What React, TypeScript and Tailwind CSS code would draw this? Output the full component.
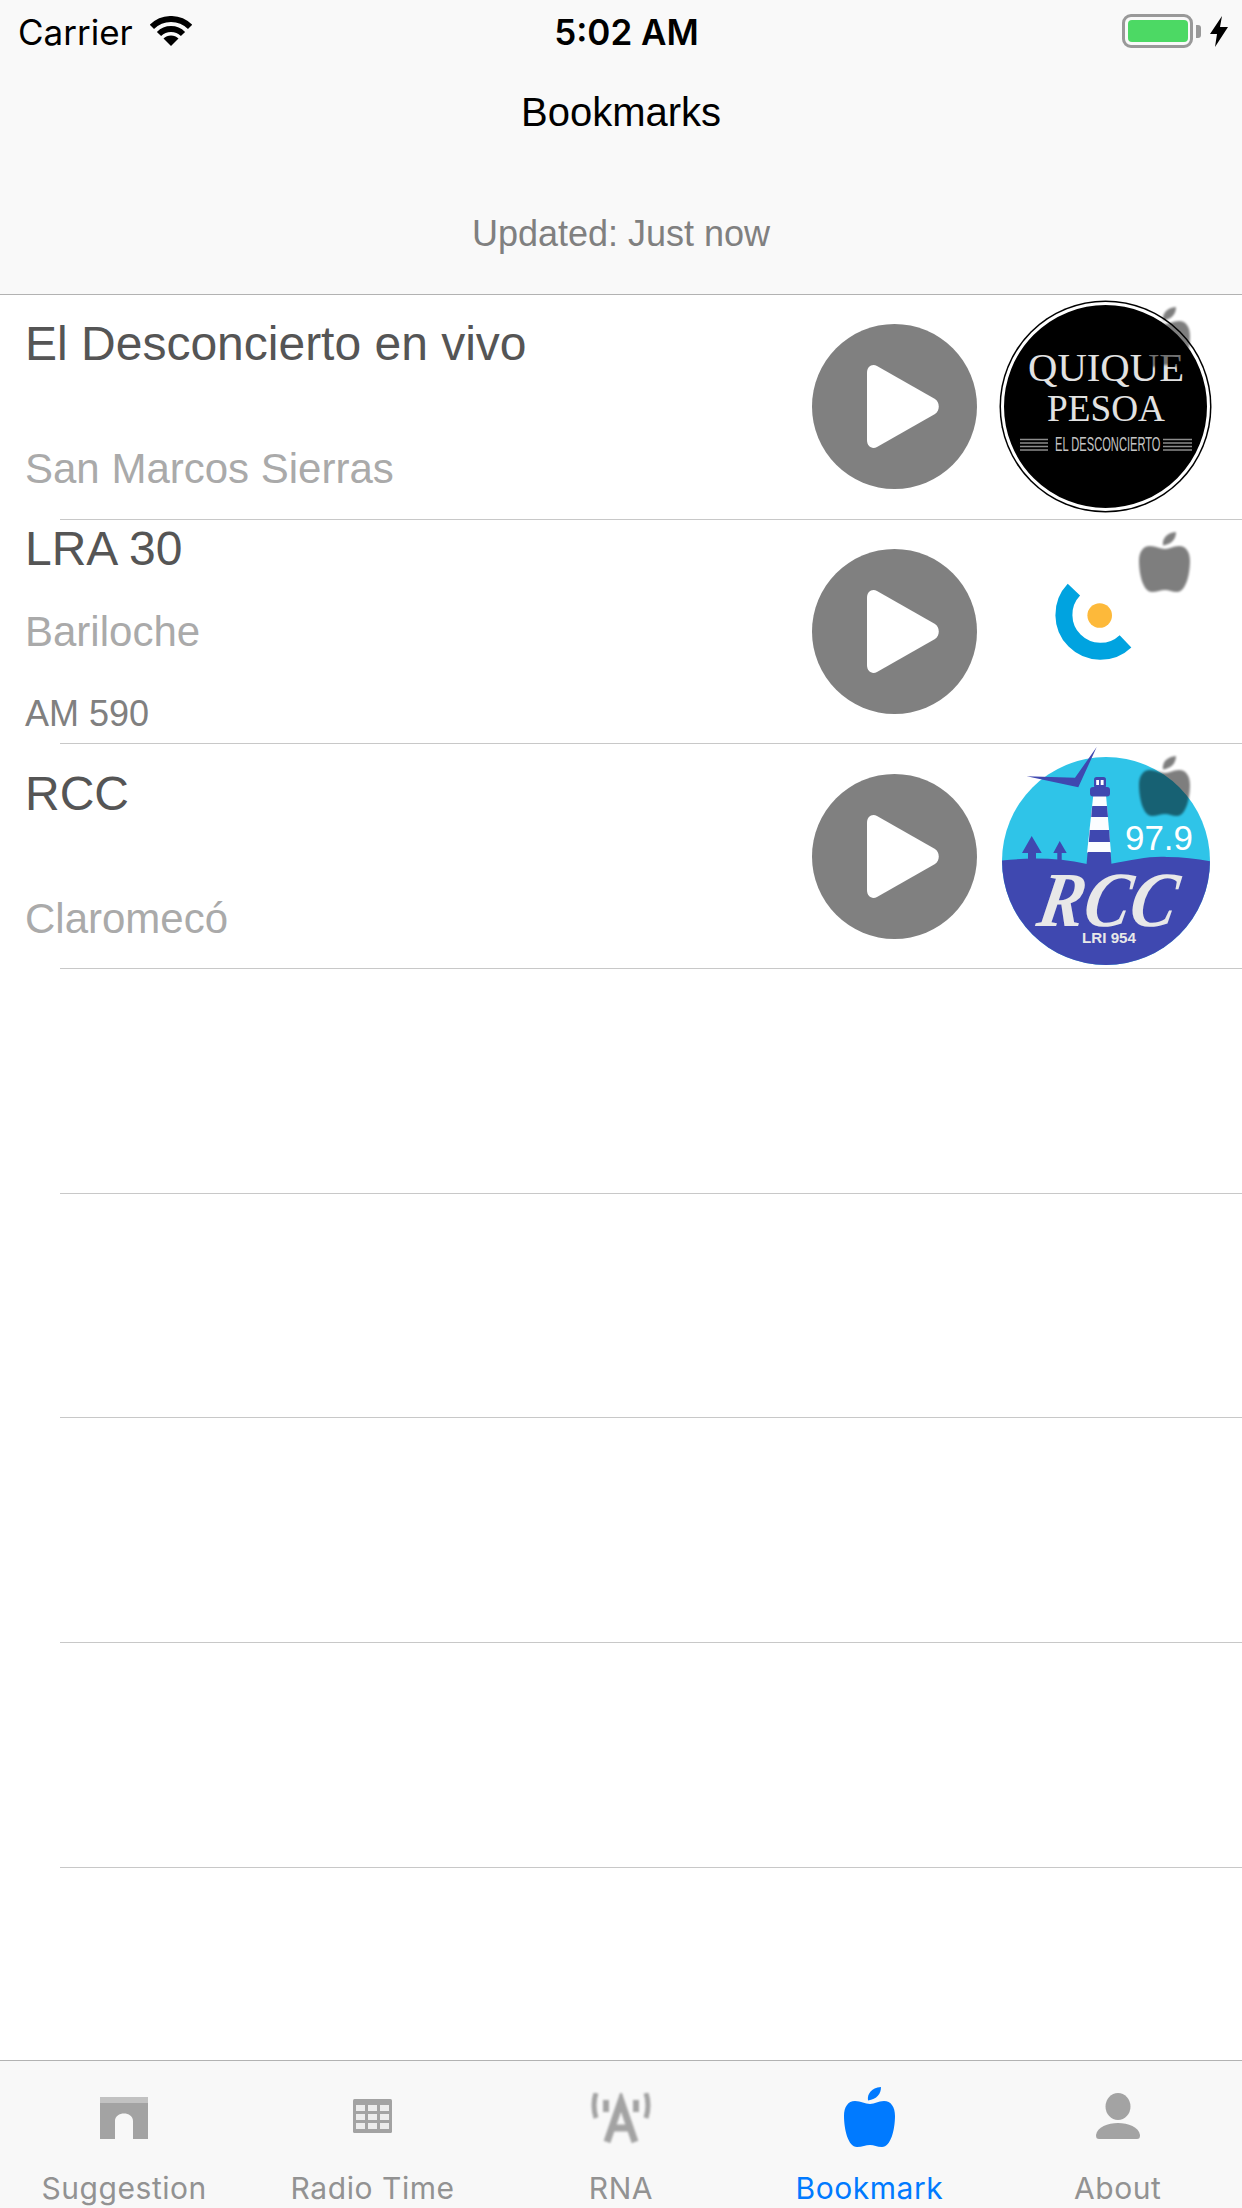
const stations = [
  {
    name: "El Desconcierto en vivo",
    city: "San Marcos Sierras",
    nameClass: "mt-[21px]",
    cityClass: "mt-[72px]",
    logo: <QuiqueLogo />,
  },
  {
    name: "LRA 30",
    city: "Bariloche",
    freq: "AM 590",
    nameClass: "mt-[1px]",
    cityClass: "mt-[30px]",
    logo: <RnaLogo />,
  },
  {
    name: "RCC",
    city: "Claromecó",
    nameClass: "mt-[22px]",
    cityClass: "mt-[72px]",
    logo: <RccLogo />,
  },
];

function AppleIcon({ className }: { className: string }) {
  return (
    <svg viewBox="0 0 51 60" className={className} fill="currentColor">
      <path d="M24 13.5C23 7 27 1 37 0C37 7 33 12 24 13.5Z" />
      <path d="M26 17C21 17 17 14 11 14C4 14 0 20 0 29C0 42 4 60 13 60C18 60 22 58 26 58C30 58 33 60 38 60C47 60 51 42 51 29C51 20 47 14 40 14C34 14 31 17 26 17Z" />
    </svg>
  );
}

function QuiqueLogo() {
  return (
    <svg viewBox="0 0 213 213" className="w-[213px] h-[213px]">
      <circle cx="106.5" cy="106.5" r="106" fill="#000" />
      <circle cx="106.5" cy="106.5" r="103" fill="none" stroke="#fff" strokeWidth="3" />
      <text x="29" y="81" fontSize="40" textLength="156" lengthAdjust="spacingAndGlyphs" fill="#e2e2e2" fontFamily="'Liberation Serif', serif">
        QUIQUE
      </text>
      <text x="48" y="121" fontSize="38" textLength="118" lengthAdjust="spacingAndGlyphs" fill="#e2e2e2" fontFamily="'Liberation Serif', serif">
        PESOA
      </text>
      <text transform="translate(56 151) scale(0.53 1)" fontSize="21" fill="#c4c4c4" fontFamily="'Liberation Sans', sans-serif">
        EL DESCONCIERTO
      </text>
      <path d="M21 139.5H49M21 143H49M21 146.5H49M21 150H49M164 139.5H193M164 143H193M164 146.5H193M164 150H193" stroke="#8c8c8c" strokeWidth="1.6" />
    </svg>
  );
}

function RnaLogo() {
  return (
    <svg viewBox="0 0 213 213" className="w-[213px] h-[213px]">
      <path d="M74.9 64.7A36.5 36.5 0 0 0 126.5 116.3" fill="none" stroke="#00a3e0" strokeWidth="17" />
      <circle cx="100.7" cy="90.5" r="12.3" fill="#fdb93a" />
    </svg>
  );
}

function RccLogo() {
  return (
    <svg viewBox="0 0 213 213" className="w-[213px] h-[213px] overflow-visible">
      <defs>
        <clipPath id="rcc-disc">
          <circle cx="107" cy="111" r="104" />
        </clipPath>
      </defs>
      <g clipPath="url(#rcc-disc)">
        <rect x="0" y="0" width="215" height="220" fill="#2fc4e8" />
        <path d="M0 111C30 107 60 108 88 114L111 114C135 110 150 106 168 107C185 107 200 109 215 112L215 220L0 220Z" fill="#3f48b0" />
      </g>
      <path d="M94.3 45H107L112 103H88Z" fill="#fbfdff" />
      <path d="M93.2 56H108L109 67H92.2ZM90.8 80H110.2L111 92H89.8ZM88.6 102H111.6L112.5 115H87.5Z" fill="#3f48b0" />
      <rect x="91" y="37" width="20" height="9.5" rx="3" fill="#3f48b0" />
      <rect x="95" y="27" width="12" height="11" rx="2.5" fill="#3f48b0" />
      <path d="M97.2 30H100V35H97.2ZM101.7 30H104.6V35H101.7Z" fill="#fff" />
      <path d="M32.7 86L42.7 103H37V111H29V103H23Z" fill="#3f48b0" />
      <path d="M60.7 91L67.7 103H62.7V110H58.3V103H54.3Z" fill="#3f48b0" />
      <path d="M27.7 26.3L76 27.7L97.7 -3L79.3 37.3Z" fill="#3f48b0" />
      <text x="126" y="100" fontSize="35" textLength="68" lengthAdjust="spacingAndGlyphs" fill="#fff" fontFamily="'Liberation Sans', sans-serif">
        97.9
      </text>
      <text transform="translate(36 176) skewX(-10)" fontSize="78" fontStyle="italic" fontWeight="700" textLength="138" lengthAdjust="spacingAndGlyphs" fill="#e8e8e8" fontFamily="'Liberation Serif', serif">
        RCC
      </text>
      <text x="83" y="193" fontSize="15.5" fontWeight="700" textLength="54" lengthAdjust="spacingAndGlyphs" fill="#e8e8e8" fontFamily="'Liberation Sans', sans-serif">
        LRI 954
      </text>
    </svg>
  );
}

function StationRow({ station }: { station: (typeof stations)[number] }) {
  return (
    <div>
      <div className="relative flex h-[223.67px] items-center">
        <div className="flex h-full flex-1 flex-col self-start pl-[25px]">
          <div className={`h-[56px] text-[48px] leading-[56px] text-[#555555] ${station.nameClass}`}>{station.name}</div>
          <div className={`h-[50px] text-[42px] leading-[50px] text-[#aaaaaa] ${station.cityClass}`}>{station.city}</div>
          {station.freq && (
            <div className="mt-[36px] h-[42px] text-[36px] leading-[42px] text-[#808080]">{station.freq}</div>
          )}
        </div>
        {/* Play button */}
        <div className="mr-[22px] flex h-[165px] w-[165px] items-center justify-center rounded-full bg-[#808080]">
          <svg viewBox="0 0 72 83" className="ml-[17px] h-[83px] w-[72px]" fill="#fff">
            <path d="M0 8C0 1.5 5 -1.5 10 1L68 34C73 37 73 46 68 49L10 82C5 84.5 0 81.5 0 75Z" />
          </svg>
        </div>
        <div className="mr-[30px] h-[213px] w-[213px]">{station.logo}</div>
        <AppleIcon className="absolute right-[52px] top-[12px] h-[60px] w-[51px] text-black opacity-50 blur-[1px]" />
      </div>
      <div className="ml-[60px] h-px bg-[#c8c8c8]" />
    </div>
  );
}

function EmptyRow() {
  return (
    <div>
      <div className="h-[223.67px]" />
      <div className="ml-[60px] h-px bg-[#c8c8c8]" />
    </div>
  );
}

const tabs = [
  {
    label: "Suggestion",
    icon: (
      <svg viewBox="0 0 48 42" className="mt-[2px] h-[42px] w-[48px] blur-[0.5px]">
        <rect width="48" height="6" fill="#c2c2c2" />
        <path d="M0 6H48V42H33V24C33 14 15 14 15 24V42H0Z" fill="#a3a3a3" />
      </svg>
    ),
  },
  {
    label: "Radio Time",
    icon: (
      <svg viewBox="0 0 39 34" className="-mt-[2px] h-[34px] w-[39px] blur-[0.5px]">
        <rect width="39" height="34" rx="1.5" fill="#a3a3a3" />
        <path d="M3 6H12V12H3ZM15 6H24V12H15ZM27 6H36V12H27ZM3 15H12V21H3ZM15 15H24V21H15ZM27 15H36V21H27ZM3 24H12V30H3ZM15 24H24V30H15ZM27 24H36V30H27Z" fill="#ececec" />
      </svg>
    ),
  },
  {
    label: "RNA",
    icon: (
      <svg viewBox="0 0 60 50" className="mt-[1px] h-[50px] w-[60px] blur-[0.8px]" fill="none" stroke="#a3a3a3">
        <path d="M5 0Q1 12 5 25M55 0Q59 12 55 25" strokeWidth="5" />
        <path d="M15 7V19M45 7V19" strokeWidth="6" />
        <path d="M16 49L30 8L44 49M20 35H40" strokeWidth="7" />
      </svg>
    ),
  },
  {
    label: "Bookmark",
    active: true,
    icon: <AppleIcon className="h-[60px] w-[51px] text-[#007aff] blur-[0.5px]" />,
  },
  {
    label: "About",
    icon: (
      <svg viewBox="0 0 44 46" className="-mt-[2px] h-[46px] w-[44px] blur-[0.6px]" fill="#a3a3a3">
        <ellipse cx="22" cy="13.5" rx="12.5" ry="13.5" />
        <path d="M0 42C1 34 12 30 22 30C32 30 43 34 44 42C44 45 43 46 41 46H3C1 46 0 45 0 42Z" />
      </svg>
    ),
  },
];

export default function App() {
  return (
    <main className="flex h-[2208px] w-full flex-col overflow-hidden bg-white font-['Liberation_Sans',sans-serif]">
      {/* Header */}
      <header className="h-[295px] shrink-0 border-b border-[#b2b2b2] bg-[#f9f9f9]">
        <div className="grid h-[62px] grid-cols-[1fr_auto_1fr] items-center font-['Inter',sans-serif] text-[35px] text-black">
          <div className="flex items-center pl-[18px]">
            <span className="translate-y-[1px]">Carrier</span>
            <svg viewBox="0 0 42 30" className="ml-[17px] h-[30px] w-[42px]" fill="none" stroke="#000">
              <path d="M1.9 10.9A27 27 0 0 1 40.1 10.9" strokeWidth="6" />
              <path d="M9 18A17 17 0 0 1 33 18" strokeWidth="6" />
              <path d="M21 30L13.5 22.5A10.6 10.6 0 0 1 28.5 22.5Z" fill="#000" stroke="none" />
            </svg>
          </div>
          <div className="ml-[11px] translate-y-[1px] font-semibold">5:02 AM</div>
          <div className="flex items-center justify-end pr-[14px]">
            <div className="flex h-[34px] w-[71px] items-center justify-center rounded-[9px] border-[3px] border-[#999999]">
              <div className="h-[22px] w-[60px] rounded-[4px] bg-[#4cd964]" />
            </div>
            <div className="ml-[3px] h-[13px] w-[5px] rounded-r-[3px] bg-[#999999]" />
            <svg viewBox="0 0 18 31" className="ml-[9px] h-[31px] w-[18px]" fill="#000">
              <path d="M12 0L0 18H7L5 31L18 11H10Z" />
            </svg>
          </div>
        </div>
        <div className="mt-[27px] text-center text-[40px] leading-[46px] text-black">Bookmarks</div>
        <div className="mt-[78px] text-center text-[36px] leading-[42px] text-[#808080]">Updated: Just now</div>
      </header>

      {/* List */}
      <div className="flex-1">
        {stations.map((station) => (
          <StationRow key={station.name} station={station} />
        ))}
        <EmptyRow />
        <EmptyRow />
        <EmptyRow />
        <EmptyRow />
      </div>

      {/* Tab bar */}
      <nav className="grid h-[148px] shrink-0 grid-cols-5 border-t border-[#b2b2b2] bg-[#f8f8f8]">
        {tabs.map((tab) => (
          <div key={tab.label} className="flex flex-col items-center">
            <div className="flex h-[109px] items-center pt-[3px]">{tab.icon}</div>
            <div className={`font-['Inter',sans-serif] text-[30px] leading-[36px] tracking-[0.55px] ${tab.active ? "text-[#007aff]" : "text-[#929292]"}`}>
              {tab.label}
            </div>
          </div>
        ))}
      </nav>
    </main>
  );
}
